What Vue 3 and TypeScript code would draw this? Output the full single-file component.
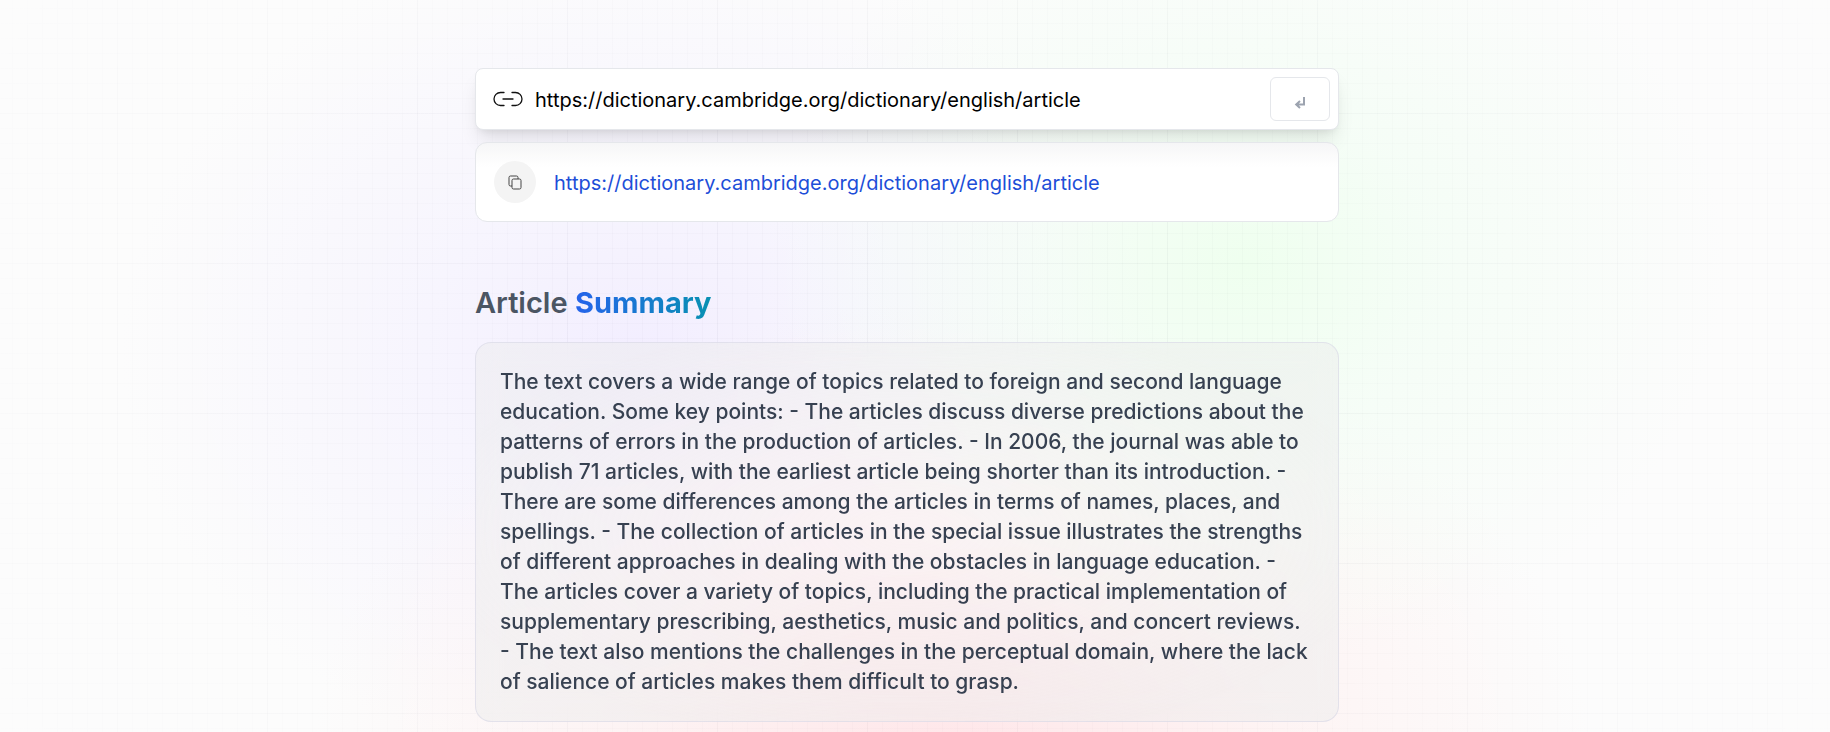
<script setup lang="ts">
import { ref } from 'vue'

const url = ref('https://dictionary.cambridge.org/dictionary/english/article')
const history = ref<string[]>(['https://dictionary.cambridge.org/dictionary/english/article'])
const summary =
  'The text covers a wide range of topics related to foreign and second language education. Some key points: - The articles discuss diverse predictions about the patterns of errors in the production of articles. - In 2006, the journal was able to publish 71 articles, with the earliest article being shorter than its introduction. - There are some differences among the articles in terms of names, places, and spellings. - The collection of articles in the special issue illustrates the strengths of different approaches in dealing with the obstacles in language education. - The articles cover a variety of topics, including the practical implementation of supplementary prescribing, aesthetics, music and politics, and concert reviews. - The text also mentions the challenges in the perceptual domain, where the lack of salience of articles makes them difficult to grasp.'

function submit() {
  if (url.value && !history.value.includes(url.value)) history.value.unshift(url.value)
}
function copy(link: string) {
  navigator.clipboard?.writeText(link)
}
</script>

<template>
  <main class="page">
    <section class="content">
      <div class="search">
        <form class="bar" @submit.prevent="submit">
          <svg class="link-icon" viewBox="0 0 30 16" aria-hidden="true">
            <path d="M11 1.500H7.500a6.500 6.500 0 0 0 0 13H11M19 1.500h3.500a6.500 6.500 0 0 1 0 13H19M10 8h10" />
          </svg>
          <input v-model="url" class="url" type="url" aria-label="Article URL" required />
          <button class="enter" type="submit" aria-label="Summarize">
            <svg viewBox="0 0 12 12" aria-hidden="true">
              <path d="M10 0v7.500H2.500M6 4L2.200 7.500L6 11" />
            </svg>
          </button>
        </form>
        <div v-for="link in history" :key="link" class="entry">
          <button class="copy" type="button" aria-label="Copy link" @click="copy(link)">
            <svg viewBox="0 0 14 14" aria-hidden="true">
              <rect x="4" y="4" width="9" height="10" rx="1.500" />
              <path d="M4 11H2.500A1.500 1.500 0 0 1 1 9.500v-7A1.500 1.500 0 0 1 2.500 1h6A1.500 1.500 0 0 1 10 2.500V4" />
            </svg>
          </button>
          <a class="entry-link" :href="link">{{ link }}</a>
        </div>
      </div>
      <h2 class="title">Article <span class="accent">Summary</span></h2>
      <div class="summary">
        <p>{{ summary }}</p>
      </div>
    </section>
  </main>
</template>

<style>
body {
  margin: 0;
}
</style>

<style scoped>
.page {
  position: relative;
  box-sizing: border-box;
  min-height: 100vh;
  padding: 68px 24px 10px 8px;
  font-family: Inter, "Open Sans", sans-serif;
  background-color: #fcfcfc;
  background-image:
    radial-gradient(ellipse 480px 400px at 68% 36%, rgba(238, 255, 238, 0.95), rgba(241, 254, 243, 0.6) 40%, rgba(250, 254, 250, 0) 100%),
    radial-gradient(ellipse 640px 460px at 52% 104%, rgba(255, 229, 232, 0.95), rgba(255, 238, 238, 0.6) 50%, rgba(255, 250, 246, 0) 100%),
    radial-gradient(ellipse 520px 420px at 35% 48%, rgba(242, 237, 255, 0.95), rgba(244, 241, 255, 0.65) 40%, rgba(252, 251, 255, 0) 100%);
}
.page::before {
  content: "";
  position: absolute;
  inset: 0;
  background-image:
    linear-gradient(90deg, rgba(60, 60, 90, 0.025) 1px, transparent 1px),
    linear-gradient(rgba(60, 60, 90, 0.025) 1px, transparent 1px),
    linear-gradient(90deg, rgba(60, 60, 90, 0.02) 1px, transparent 1px),
    linear-gradient(rgba(60, 60, 90, 0.02) 1px, transparent 1px);
  background-size:
    150px 150px,
    150px 150px,
    15px 15px,
    15px 15px;
  background-position:
    117px 113px,
    117px 113px,
    12px 8px,
    12px 8px;
  mask-image: radial-gradient(ellipse 60% 110% at 50% 50%, #000 30%, rgba(0, 0, 0, 0.2) 100%);
}
.content {
  position: relative;
  max-width: 864px;
  margin: 0 auto;
}
.search {
  display: flex;
  flex-direction: column;
  gap: 12px;
}
.bar,
.entry {
  box-sizing: border-box;
  display: flex;
  align-items: center;
  border: 1px solid #e5e7eb;
  background: #fff;
}
.bar {
  height: 62px;
  padding: 0 8px 0 17px;
  border-radius: 8px;
  box-shadow:
    0 13px 19px -4px rgba(0, 0, 0, 0.1),
    0 5px 8px -5px rgba(0, 0, 0, 0.1);
}
.link-icon {
  flex: none;
  width: 30px;
  height: 16px;
  margin-right: 12px;
  fill: none;
  stroke: #111;
  stroke-width: 1.3;
  stroke-linecap: round;
}
.url,
.entry-link {
  padding: 2px 0 0;
  font-family: Inter, sans-serif;
  font-size: 20px;
  font-weight: 400;
  line-height: 30px;
}
.url {
  flex: 1;
  min-width: 0;
  border: 0;
  outline: 0;
  background: transparent;
  color: #000;
}
.enter {
  display: flex;
  flex: none;
  align-items: center;
  justify-content: center;
  box-sizing: border-box;
  width: 60px;
  height: 44px;
  padding: 8px 0 0;
  border: 1px solid #e5e7eb;
  border-radius: 6px;
  background: transparent;
}
.enter svg {
  width: 12px;
  height: 12px;
  fill: none;
  stroke: #9ca3af;
  stroke-width: 2;
}
.entry {
  height: 80px;
  padding: 0 18px;
  gap: 18px;
  border-radius: 12px;
  background: linear-gradient(#f6f6f7, #fff 24px);
}
.copy {
  display: flex;
  flex: none;
  align-items: center;
  justify-content: center;
  width: 42px;
  height: 42px;
  padding: 0;
  border: 0;
  border-radius: 50%;
  background: #f4f4f4;
}
.copy svg {
  width: 14px;
  height: 14px;
  overflow: visible;
  fill: none;
  stroke: #444;
  stroke-width: 1;
}
.entry-link {
  overflow: hidden;
  color: #1d4ed8;
  text-decoration: none;
  text-overflow: ellipsis;
  white-space: nowrap;
}
.title {
  margin: 62px 0 20px;
  color: #4b5563;
  font-size: 29px;
  font-weight: 600;
  line-height: 38px;
}
.accent {
  background: linear-gradient(90deg, #2563eb, #0891b2);
  background-clip: text;
  color: transparent;
  font-weight: 700;
}
.summary {
  padding: 24px;
  border: 1px solid rgba(215, 215, 230, 0.6);
  border-radius: 16px;
  background: radial-gradient(ellipse at center, rgba(248, 246, 248, 0.2), rgba(236, 236, 236, 0.5) 80%);
  backdrop-filter: blur(12px);
}
.summary p {
  margin: 0;
  color: #374151;
  font-size: 21px;
  font-weight: 500;
  line-height: 30px;
}
</style>
